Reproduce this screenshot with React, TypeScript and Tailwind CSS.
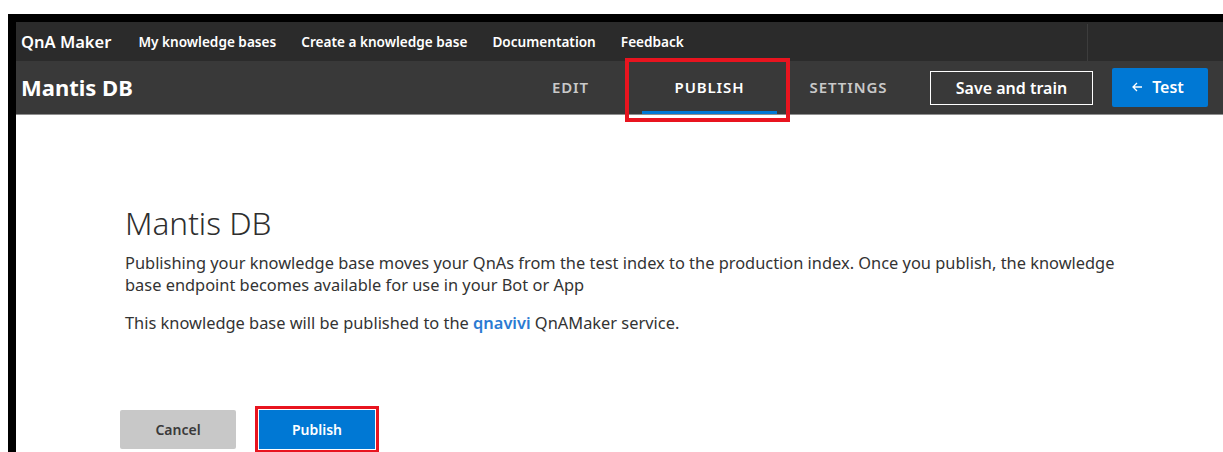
import React from "react";

const font = { fontFamily: '"Noto Sans", "Open Sans", sans-serif' };

function TopNav() {
  const links = ["My knowledge bases", "Create a knowledge base", "Documentation", "Feedback"];
  return (
    <div className="flex h-[39px] items-center bg-[#2b2b2b] pt-[2px] text-white">
      <div className="pl-[5px] pr-[27px] text-[16.5px] font-semibold">QnA Maker</div>
      <div className="flex items-center gap-[25px] text-[13.6px] font-semibold">
        {links.map((l) => (
          <span key={l}>{l}</span>
        ))}
      </div>
      <div className="ml-auto h-full w-[136px] border-l border-[#3d3d3d]" />
    </div>
  );
}

function SubBar() {
  const tabs = ["EDIT", "PUBLISH", "SETTINGS"];
  return (
    <div className="flex h-[54px] items-stretch border-b border-[#8f8f8f] bg-[#393939] text-white">
      <div className="flex items-center pl-[5px] text-[22px] font-bold">Mantis DB</div>
      <div className="ml-auto flex items-stretch">
        {tabs.map((t) => {
          const active = t === "PUBLISH";
          return (
            <div key={t} className="relative flex w-[139px] items-center justify-center">
              <span
                className={
                  "text-[15px] font-semibold tracking-[0.06em] " +
                  (active ? "text-white" : "text-[#c9c9c9]")
                }
              >
                {t}
              </span>
              {active && (
                <>
                  <div className="absolute bottom-0 left-[2px] right-[2px] h-[3px] bg-[#0078d4]" />
                  <div className="pointer-events-none absolute -left-[15px] -right-[11px] top-[-3px] bottom-[-8px] border-[4px] border-[#e8141f]" />
                </>
              )}
            </div>
          );
        })}
      </div>
      <div className="ml-[12px] flex items-center">
        <button className="h-[34px] w-[163px] border border-white text-[16px] font-semibold text-white">
          Save and train
        </button>
      </div>
      <div className="ml-[19px] mr-[15px] flex items-center">
        <button className="mb-[1px] flex h-[39px] w-[96px] items-center justify-center gap-[9px] rounded-[2px] bg-[#0078d4] pr-[4px] text-[16px] font-semibold text-white">
          <svg width="11" height="10" viewBox="0 0 11 10" fill="none" stroke="white" strokeWidth="1.3">
            <path d="M10 5H1.5M5 1L1 5l4 4" />
          </svg>
          Test
        </button>
      </div>
    </div>
  );
}

function PublishPanel() {
  return (
    <div className="pl-[109px] pt-[89px] text-[#333333]">
      <h1 className="text-[31.5px] font-light leading-[38px] text-[#2e2e2e]">Mantis DB</h1>
      <p className="mt-[10px] w-[1010px] text-[16.4px] leading-[22px]">
        Publishing your knowledge base moves your QnAs from the test index to the production index. Once you
        publish, the knowledge base endpoint becomes available for use in your Bot or App
      </p>
      <p className="mt-[16px] text-[16.4px] leading-[22px]">
        This knowledge base will be published to the{" "}
        <span className="font-semibold text-[#2b7bd2]">qnavivi</span> QnAMaker service.
      </p>
      <div className="mt-[76px] flex items-center gap-[23px] -ml-[5px]">
        <button className="h-[39px] w-[116px] rounded-[2px] bg-[#c8c8c8] text-[14px] font-semibold text-[#3a3a3a]">
          Cancel
        </button>
        <div className="relative">
          <button className="h-[39px] w-[116px] bg-[#0078d4] text-[14px] font-semibold text-white">
            Publish
          </button>
          <div className="pointer-events-none absolute -left-[4px] -right-[4px] -top-[4px] -bottom-[4px] border-[3px] border-[#e8141f]" />
        </div>
      </div>
    </div>
  );
}

export default function App() {
  return (
    <div className="h-[452px] w-[1223px] overflow-hidden bg-white pl-[8px] pt-[14px]" style={font}>
      <div className="h-full border-l-[8px] border-t-[8px] border-black bg-white">
        <TopNav />
        <SubBar />
        <PublishPanel />
      </div>
    </div>
  );
}
